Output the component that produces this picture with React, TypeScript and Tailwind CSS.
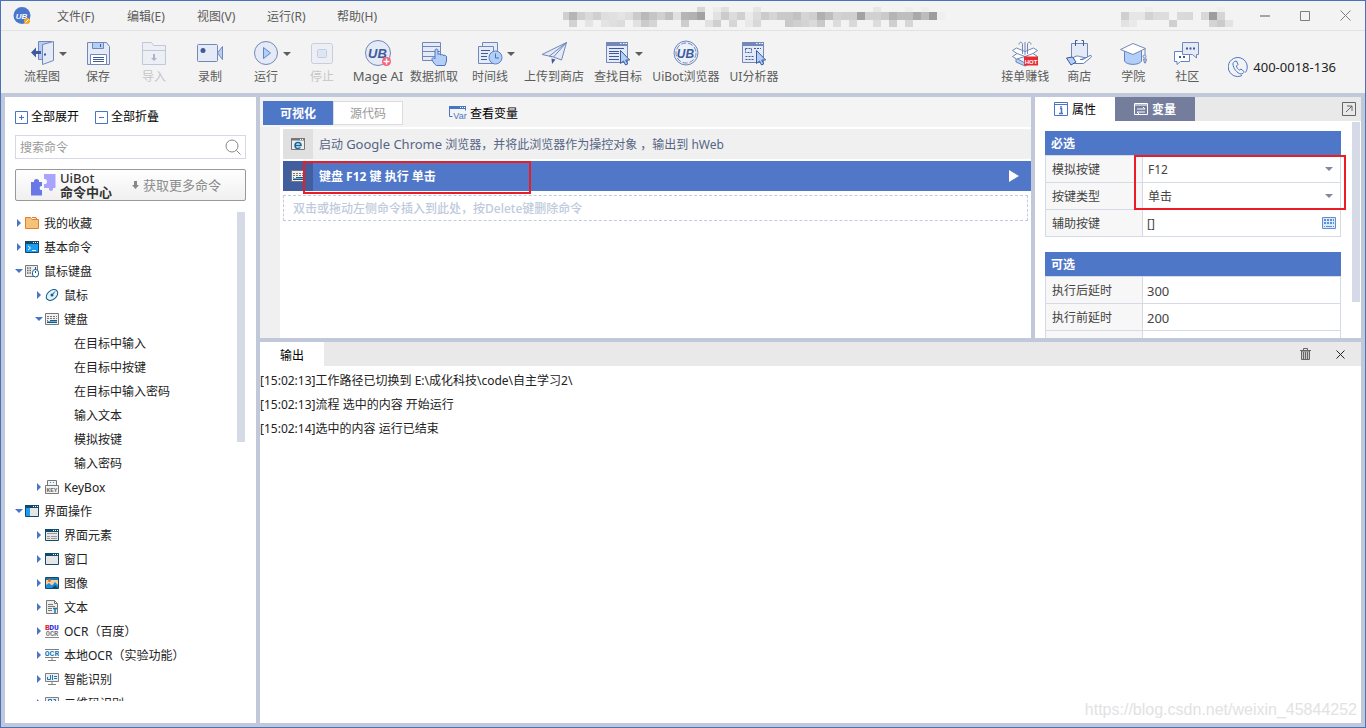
import type { ReactNode } from "react";

/* ---------- shared shapes ---------- */

const LINE = "#7388b8";
const PALE = "#e4eaf6";
const SKY = "#b4cff7";
const DARK = "#3d5b9b";

function Tool({ children }: { children: ReactNode }) {
  return (
    <svg width="28" height="28" viewBox="0 0 28 28" fill={PALE} stroke={LINE} aria-hidden="true">
      {children}
    </svg>
  );
}

function Small({ children }: { children: ReactNode }) {
  return (
    <svg width="14" height="14" viewBox="0 0 14 14" fill="none" className="shrink-0" aria-hidden="true">
      {children}
    </svg>
  );
}

function Caret({ className }: { className: string }) {
  return (
    <svg width="8" height="4" viewBox="0 0 8 4" className={className} aria-hidden="true">
      <path d="M0 0h8L4 4z" fill="currentColor" />
    </svg>
  );
}

function UB({ x, y, size, fill }: { x: number; y: number; size: number; fill: string }) {
  return (
    <text
      x={x}
      y={y}
      fontSize={size}
      fill={fill}
      stroke="none"
      textAnchor="middle"
      fontWeight="bold"
      fontStyle="italic"
      fontFamily="Liberation Sans, sans-serif"
    >
      UB
    </text>
  );
}

const pointer = <path d="M16.500 11.500v13l3-2.500 2 4 2.200-1-2-4h4z" fill={SKY} stroke={DARK} />;

/* ---------- toolbar icons ---------- */

const icons: Record<string, ReactNode> = {
  flow: (
    <Tool>
      <path d="M10.500 2.500h13v18h-13z" fill={SKY} />
      <path d="M14.500 5.500l11-3v19l-11 4z" />
      <path d="M3 13.500l5-5v3.500h5v3H8v3.500z" fill={DARK} stroke="none" />
      <path d="M16 14.500h2v2h-2z" fill={DARK} stroke="none" />
    </Tool>
  ),
  save: (
    <Tool>
      <path d="M3.500 3.500h19l3 4v18h-22z" />
      <path d="M8.500 3.500h11v6h-11z" fill={SKY} />
      <path d="M6.500 15.500h16v10h-16z" fill="#fff" />
      <path d="M16.500 5v3M9 18.500h11M9 20.500h11M9 22.500h11" stroke={DARK} />
    </Tool>
  ),
  import: (
    <Tool>
      <g opacity="0.4">
        <path d="M2.500 25.500v-22h9l2 3h12v19z" />
        <path d="M2.500 11.500h23" />
        <path d="M14 15v6" stroke={DARK} strokeWidth="2" />
        <path d="M11 19h6l-3 3z" fill={DARK} stroke="none" />
      </g>
    </Tool>
  ),
  record: (
    <Tool>
      <rect x="1.500" y="5.500" width="20" height="17" rx="1" />
      <path d="M21.500 14l5-6.500v13z" fill={SKY} />
      <circle cx="7" cy="11.500" r="2.500" fill={DARK} stroke="none" />
    </Tool>
  ),
  run: (
    <Tool>
      <circle cx="14" cy="14" r="11.500" />
      <path d="M11.500 8.500v11l7-5.500z" fill={SKY} stroke="#5f84c9" />
    </Tool>
  ),
  stop: (
    <Tool>
      <g opacity="0.35">
        <rect x="3.500" y="4.500" width="21" height="20" rx="2" />
        <rect x="9.500" y="10.500" width="9" height="8" rx="1" fill={SKY} />
      </g>
    </Tool>
  ),
  mage: (
    <Tool>
      <circle cx="14" cy="14" r="12.500" />
      <UB x={13.5} y={18.5} size={13} fill={DARK} />
      <circle cx="22.500" cy="22.500" r="4.500" fill="#f4607a" stroke="none" />
      <path d="M22.500 19.500v6M19.500 22.500h6" stroke="#fff" strokeWidth="1.500" />
    </Tool>
  ),
  grab: (
    <Tool>
      <path d="M2.500 3.500h18v18h-18zM2.500 7.500h18M2.500 12.500h18M2.500 17.500h18" />
      <path
        d="M15 20v-8.500c0-2 3-2 3 0v4c1-1 2-1 2.500.5 1-1 2.500-.5 2.500.5 1.500-.8 3.500 0 3.500 1.500v4l-1.500 4.500h-8.500c-2-1-3.500-3.500-4.500-6-.5-1.500 1.500-2.500 3-.5z"
        fill={SKY}
        stroke="#4e74bb"
      />
    </Tool>
  ),
  timeline: (
    <Tool>
      <path d="M6.500 7v-3.500h15v15" />
      <path d="M2.500 7.500h15v17h-15z" />
      <path d="M5 11.500h9M5 14.500h7M5 17.500h6M5 20.500h6" stroke={DARK} />
      <circle cx="19.500" cy="18.500" r="6.500" fill={SKY} stroke="#5b80c5" />
      <path d="M19.500 14.500v4.500h3.500" fill="none" stroke="#4a6fb5" />
    </Tool>
  ),
  plane: (
    <Tool>
      <path d="M2 15.500l24.500-12-5 17.500-8-3z" />
      <path d="M26.500 3.500L9.500 17l2.500 1M26.500 3.500L13.500 18" fill="none" />
      <path d="M11.500 19.500l4 1-3.500 4.500z" fill={DARK} stroke="none" />
    </Tool>
  ),
  find: (
    <Tool>
      <path d="M2.500 3.500h21v20h-21z" />
      <path d="M2 3h22v4H2z" fill={LINE} stroke="none" />
      <path d="M16 4.500h1.500M19 4.500h1.500M21.500 4.500h1.500" stroke="#fff" />
      <path d="M5 9.500h15M5 12.500h10M5 14.500h10M5 17.500h10M5 20.500h10" stroke={DARK} />
      {pointer}
    </Tool>
  ),
  browser: (
    <Tool>
      <circle cx="14" cy="14" r="12" />
      <circle cx="14" cy="14" r="10" strokeDasharray="5 2" fill="#edf1f9" />
      <UB x={13.5} y={18.5} size={12} fill={DARK} />
    </Tool>
  ),
  analyze: (
    <Tool>
      <path d="M2.500 3.500h21v20h-21z" />
      <path d="M2 3h22v4H2z" fill={LINE} stroke="none" />
      <path d="M16 4.500h1.500M19 4.500h1.500M21.500 4.500h1.500" stroke="#fff" />
      <path d="M5.500 9.500h6v4h-6zM5.500 17.500h9M5.500 20.500h9M14 9.500h7" strokeDasharray="2 1" stroke={DARK} fill="none" />
      {pointer}
    </Tool>
  ),
  earn: (
    <Tool>
      <path d="M5 19l9 5 9-5v4l-9 4-9-4z" fill={SKY} />
      <path d="M1.500 11.500l4-2.500 8.500 3.500L22.500 9l4 2.500-4.500 3 4.500 3-4 2.500-8.500-2.500-8.500 2.500-4-2.500 4.500-3z" fill="#fff" />
      <path d="M6 14.500l8 3 8-3" fill="none" />
      <path d="M11.500 15V5M14 16V3M16.500 15V5M8 5.500c0-3 3.500-3 3.500 0M16.500 5.500c0-3 3.500-3 3.500 0" fill="none" />
      <path d="M13 17.500h14v9H13z" fill="#ea2a33" stroke="none" />
      <text
        x="20"
        y="24.500"
        fontSize="6"
        fill="#fff"
        stroke="none"
        textAnchor="middle"
        fontWeight="bold"
        fontFamily="Liberation Sans, sans-serif"
      >
        HOT
      </text>
    </Tool>
  ),
  shop: (
    <Tool>
      <path d="M6.500 4.500h16v14h-16z" />
      <path d="M10.500 7V1.500M18.500 7V1.500M10.500 1.500h2M16.500 1.500h2" stroke={DARK} />
      <path d="M8.500 18.500c4-3 6-.5 8.500-.5s2 2.500-2 2.500h3l7-4c1.500-.3 1.800.7.8 2l-7.300 6H9.500z" fill="#fff" stroke="#5f7cb8" />
      <path d="M1.500 19l6-1 3.500 5-5 3z" fill={SKY} stroke={DARK} />
    </Tool>
  ),
  school: (
    <Tool>
      <path d="M5.500 11v11c2 4.500 15 4.500 17 0V11z" fill={SKY} stroke="#5f84c9" />
      <path d="M1.500 10.500L14 4.500l12.500 5L14 15.500z" fill="#fff" />
      <path d="M26 10v8" />
      <circle cx="25.500" cy="17.500" r="1.500" />
      <path d="M24.500 20h3l-1 4h-1z" fill={SKY} />
    </Tool>
  ),
  community: (
    <Tool>
      <path d="M1.500 12.500h15v10h-9l-3.500 3v-3H1.500z" fill="#fff" stroke="#5f84c9" />
      <path d="M9.500 3.500h16v12h-2v3.500l-4-3.500h-10z" />
      <path d="M13 9.500h2M16.500 9.500h2M20 9.500h2M6 18h2M10 18h2" stroke={DARK} strokeWidth="2" />
    </Tool>
  ),
};

type ToolItem = { label: string; icon: string; width: string; caret?: boolean; off?: boolean };

const mainTools: ToolItem[] = [
  { label: "流程图", icon: "flow", width: "w-14", caret: true },
  { label: "保存", icon: "save", width: "w-14" },
  { label: "导入", icon: "import", width: "w-14", off: true },
  { label: "录制", icon: "record", width: "w-14" },
  { label: "运行", icon: "run", width: "w-14", caret: true },
  { label: "停止", icon: "stop", width: "w-14", off: true },
  { label: "Mage AI", icon: "mage", width: "w-14" },
  { label: "数据抓取", icon: "grab", width: "w-14" },
  { label: "时间线", icon: "timeline", width: "w-14", caret: true },
  { label: "上传到商店", icon: "plane", width: "w-[72px]" },
  { label: "查找目标", icon: "find", width: "w-14", caret: true },
  { label: "UiBot浏览器", icon: "browser", width: "w-20" },
  { label: "UI分析器", icon: "analyze", width: "w-14" },
];

const sideTools: ToolItem[] = [
  { label: "接单赚钱", icon: "earn", width: "w-[54px]" },
  { label: "商店", icon: "shop", width: "w-[54px]" },
  { label: "学院", icon: "school", width: "w-[54px]" },
  { label: "社区", icon: "community", width: "w-[54px]" },
];

function ToolButton({ item }: { item: ToolItem }) {
  return (
    <button
      disabled={item.off}
      className={`relative flex shrink-0 flex-col items-center whitespace-nowrap pt-2 ${item.width} ${
        item.off ? "text-[#c6c6c8]" : "text-[#5c5c5c]"
      }`}
    >
      {icons[item.icon]}
      <span className={item.label === "Mage AI" ? "text-[13px] leading-[18px]" : "leading-5"}>{item.label}</span>
      {item.caret && <Caret className="absolute right-[3px] top-[21px] text-[#5e5e5e]" />}
    </button>
  );
}

/* ---------- title bar ---------- */

type Cell = [number, number, string];

const titleMid =
  "b5 cf da d0 de e0 e4 de cb b9 c5 d0 c0 e0 b5 b2 a2 f3 e2 cb dc d0 eb dc cb d5 ca c9 c2 d5 cf b0 be d3 cf cf a2 d1 d1 ca b5 be be a9 bc 9d ef"
    .split(" ")
    .map((c, i): Cell => [i, 1, c]);

const titleCells: Cell[] = [
  ...titleMid,
  [16, 0, "d6"], [18, 0, "ec"], [19, 0, "df"], [23, 0, "e6"], [38, 0, "e6"], [42, 0, "ee"], [44, 0, "ee"],
  [0, 2, "d2"], [2, 2, "e4"], [4, 2, "e3"], [5, 2, "df"], [6, 2, "dc"], [8, 2, "e1"], [9, 2, "cb"], [10, 2, "d5"],
  [14, 2, "cd"], [17, 2, "e1"], [18, 2, "cf"], [20, 2, "d6"], [22, 2, "e8"], [23, 2, "d8"], [27, 2, "c9"],
  [28, 2, "cf"], [29, 2, "d3"], [30, 2, "da"], [31, 2, "c9"], [33, 2, "dc"], [35, 2, "d9"], [38, 2, "dc"],
  [40, 2, "cf"], [42, 2, "d6"],
];

const userCells: Cell[] = [
  [0, 1, "cf"], [1, 1, "e6"], [2, 1, "e6"], [3, 1, "d2"], [4, 1, "dc"], [5, 1, "dd"], [7, 1, "da"], [8, 1, "d8"],
  [10, 1, "d8"], [11, 1, "9d"], [12, 1, "d5"], [3, 0, "ef"], [12, 0, "ef"], [0, 2, "e2"], [1, 2, "e9"],
  [6, 2, "cf"], [11, 2, "d4"], [12, 2, "cb"], [13, 2, "e3"],
];

function Mosaic({ cells, columns }: { cells: Cell[]; columns: number }) {
  return (
    <svg width={columns * 8} height="24" viewBox={`0 0 ${columns * 8} 24`} shapeRendering="crispEdges" className="shrink-0 overflow-visible" aria-hidden="true">
      {columns > 20 && <rect x="-6" y="8" width="6" height="8" fill="#cfcfcf" />}
      {cells.map(([x, y, c]) => (
        <rect key={`${x}-${y}`} x={x * 8} y={y === 0 ? 3 : y * 8} width="8" height={y === 0 ? 5 : y === 1 ? 8 : 7} fill={`#${c}${c}${c}`} />
      ))}
    </svg>
  );
}

function TitleBar() {
  return (
    <header className="flex h-[30px] shrink-0 items-center border-b border-[#e2e2e2] bg-[#f3f3f3] text-[#5c5c5c]">
      <svg width="18" height="18" viewBox="0 0 18 18" className="ml-3 shrink-0" aria-hidden="true">
        <circle cx="9" cy="8.500" r="8.500" fill="#4c76cb" />
        <UB x={8.5} y={11.5} size={8} fill="#fff" />
        <circle cx="14" cy="14" r="3" fill="#f4a81d" />
        <path d="M12.500 15.500l3-3" stroke="#fff" />
      </svg>
      <nav className="ml-[26px] flex pt-0.5">
        {["文件(F)", "编辑(E)", "视图(V)", "运行(R)", "帮助(H)"].map((m) => (
          <button key={m} className="w-[70px] shrink-0 text-left">
            {m}
          </button>
        ))}
      </nav>
      <div className="flex flex-1 justify-center pr-3.5">
        <Mosaic cells={titleCells} columns={47} />
      </div>
      <Mosaic cells={userCells} columns={14} />
      <div className="ml-3 flex items-center text-[#7d7d7d]">
        <button aria-label="最小化" className="flex w-10 justify-center">
          <svg width="11" height="11" viewBox="0 0 11 11" stroke="#a5a5a5" strokeWidth="2">
            <path d="M0 6h10" />
          </svg>
        </button>
        <button aria-label="最大化" className="flex w-10 justify-center">
          <svg width="11" height="11" viewBox="0 0 11 11" fill="none" stroke="currentColor">
            <path d="M.5 1.500h9v9h-9z" />
          </svg>
        </button>
        <button aria-label="关闭" className="flex w-10 justify-center">
          <svg width="11" height="11" viewBox="0 0 11 11" stroke="currentColor">
            <path d="M.5.500l10 10M10.500.500l-10 10" />
          </svg>
        </button>
      </div>
    </header>
  );
}

/* ---------- command tree ---------- */

const NAVY = "#124a6e";

const windowFrame = (
  <>
    <path d="M.5 1.500h13v11H.5z" fill="#e6e6e6" stroke={NAVY} />
    <path d="M0 1h14v3H0z" fill={NAVY} />
    <path d="M8 2.500h1M10 2.500h1M12 2.500h1" stroke="#fff" />
  </>
);

const monitor = (
  <>
    <path d="M.5 1.500h13v8H.5z" fill="#eee" stroke="#808080" />
    <path d="M7 10v2M3 12.500h8" stroke="#808080" />
  </>
);

const keyboard = (
  <>
    <path d="M.5 1.500h13v11H.5z" fill="#f1f1f1" stroke="#777" />
    <path d="M2 4.500h10M2 6.500h10" stroke="#777" strokeDasharray="2 1" />
    <path d="M2 8.500h1M11 8.500h1M2 10.500h10" stroke="#777" />
    <path d="M2 10h10M5 8.500h7" stroke="#0f5d8c" />
    <path d="M2 10.500h10" stroke="#0f5d8c" />
  </>
);

function MiniText({ x, y, size, fill, children }: { x: number; y: number; size: number; fill: string; children: string }) {
  return (
    <text x={x} y={y} fontSize={size} fill={fill} textAnchor="middle" fontWeight="bold" fontFamily="Liberation Mono, monospace">
      {children}
    </text>
  );
}

type Node = { label: string; level: 0 | 1 | 2; open?: boolean; icon?: ReactNode };

const tree: Node[] = [
  { label: "我的收藏", level: 0, icon: <path d="M.5 12.500v-11h5l1.500 2h6.500v9zM7 1.500h4l1 2" fill="#f4c37a" stroke="#e97c2b" /> },
  {
    label: "基本命令",
    level: 0,
    icon: (
      <>
        <path d="M.5 1.500h13v11H.5z" fill="#1b9df2" stroke={NAVY} />
        <path d="M0 1h14v3H0z" fill={NAVY} />
        <path d="M8 2.500h1M10 2.500h1M12 2.500h1M3 6l2.500 2L3 10M7 10.500h4" stroke="#fff" />
      </>
    ),
  },
  {
    label: "鼠标键盘",
    level: 0,
    open: true,
    icon: (
      <>
        <path d="M.5 1.500h12v11H.5z" fill="#eee" stroke="#777" />
        <path d="M2 4h5M2 6.500h5M2 9h5" stroke="#666" strokeWidth="1.500" strokeDasharray="1.500 1" />
        <rect x="7.500" y="5.500" width="6" height="7.500" rx="3" fill="#fff" stroke="#0f5d8c" />
        <path d="M10.500 5.500V3M10.500 7v2" stroke="#0f5d8c" />
      </>
    ),
  },
  {
    label: "鼠标",
    level: 1,
    icon: (
      <>
        <ellipse cx="7" cy="7" rx="6.500" ry="4.500" transform="rotate(-40 7 7)" fill="#e4f0f8" stroke="#0f5d8c" />
        <circle cx="7" cy="7" r="1.500" fill="#0f5d8c" />
        <path d="M7 7l3-3.500" stroke="#0f5d8c" />
      </>
    ),
  },
  { label: "键盘", level: 1, open: true, icon: keyboard },
  { label: "在目标中输入", level: 2 },
  { label: "在目标中按键", level: 2 },
  { label: "在目标中输入密码", level: 2 },
  { label: "输入文本", level: 2 },
  { label: "模拟按键", level: 2 },
  { label: "输入密码", level: 2 },
  {
    label: "KeyBox",
    level: 1,
    icon: (
      <>
        <path d="M2.500 5V.500h9V5M.5 5.500h13v8H.5z" fill="#f3f3f3" stroke="#777" />
        <path d="M5 2.500h1M8 2.500h1" stroke="#1b9df2" />
        <MiniText x={7} y={12} size={6} fill="#666">KEY</MiniText>
      </>
    ),
  },
  {
    label: "界面操作",
    level: 0,
    open: true,
    icon: (
      <>
        {windowFrame}
        <path d="M1 4h4v8H1z" fill="#1b9df2" />
      </>
    ),
  },
  {
    label: "界面元素",
    level: 1,
    icon: (
      <>
        {windowFrame}
        <path d="M2 5.500h10M2 8.500h3M2 10.500h3M6 8.500h6M6 10.500h6" stroke="#999" />
      </>
    ),
  },
  { label: "窗口", level: 1, icon: windowFrame },
  {
    label: "图像",
    level: 1,
    icon: (
      <>
        <path d="M.5 1.500h13v11H.5z" fill="#f7cf95" stroke={NAVY} />
        <path d="M1 2h12v2H1z" fill="#1679b8" />
        <circle cx="4.500" cy="4.500" r="1.500" fill="#ef6b2a" />
        <path d="M1 12V9l3-2 3 2.500L10 6l3 3v3z" fill="#1b8fe0" />
        <path d="M7 12l3-3 3 3z" fill={NAVY} />
      </>
    ),
  },
  {
    label: "文本",
    level: 1,
    icon: (
      <>
        <path d="M1.500.500h8l3 3v10h-11zM9.500.500v3h3" fill="#eee" stroke="#777" />
        <path d="M3 4.500h5M3 6.500h7M3 8.500h4M3 10.500h4" stroke="#777" />
        <path d="M8 8.500h4M10 8.500V13" stroke="#1679b8" strokeWidth="1.500" />
      </>
    ),
  },
  {
    label: "OCR（百度）",
    level: 1,
    icon: (
      <>
        <MiniText x={2.5} y={6} size={8} fill="#e02020">B</MiniText>
        <MiniText x={9} y={6} size={8} fill="#2a2ae0">DU</MiniText>
        <MiniText x={7} y={12} size={7} fill="#777">OCR</MiniText>
        <path d="M0 13.500h14" stroke="#888" />
      </>
    ),
  },
  {
    label: "本地OCR（实验功能）",
    level: 1,
    icon: (
      <>
        <path d="M0 1.500h14M0 9.500h14M7 10v2M3 12.500h8" stroke="#808080" />
        <MiniText x={7} y={8} size={8} fill="#1679b8">OCR</MiniText>
      </>
    ),
  },
  {
    label: "智能识别",
    level: 1,
    icon: (
      <>
        {monitor}
        <path d="M5.500 3v4.500h-3V5M7.500 3v5M9 4.500h3M9 6.500h3" stroke="#1679b8" />
      </>
    ),
  },
  {
    label: "二维码识别",
    level: 1,
    icon: (
      <>
        {monitor}
        <path d="M3.500 3.500h3v4h-3zM8.500 3.500h2v2M10.500 7v1" stroke="#1679b8" />
      </>
    ),
  },
];

const indent = ["pl-0", "pl-5", "pl-[59px]"];

function TreeRow({ node }: { node: Node }) {
  return (
    <li className={`flex h-6 items-center ${indent[node.level]}`}>
      {node.level < 2 && (
        <svg width="8" height="8" viewBox="0 0 8 8" className="mr-0.5 shrink-0" fill="#4a74c6" aria-hidden="true">
          {node.open ? <path d="M0 2h8L4 6z" /> : <path d="M2 0l4 4-4 4z" />}
        </svg>
      )}
      {node.icon && <Small>{node.icon}</Small>}
      <span className={node.level < 2 ? "ml-[5px] pt-0.5" : "pt-0.5"}>{node.label}</span>
    </li>
  );
}

function CommandPanel() {
  return (
    <aside className="flex w-[251px] shrink-0 flex-col overflow-hidden bg-white px-2.5 pt-2.5 text-[#222]">
      <div className="flex h-5 shrink-0 gap-4 text-black">
        <button className="flex items-center gap-[3px]">
          <svg width="13" height="13" viewBox="0 0 13 13" fill="none" stroke="#4a74c6" aria-hidden="true">
            <path d="M.5.500h12v12H.5zM4 6.500h5M6.500 4v5" />
          </svg>
          全部展开
        </button>
        <button className="flex items-center gap-[3px]">
          <svg width="13" height="13" viewBox="0 0 13 13" fill="none" stroke="#4a74c6" aria-hidden="true">
            <path d="M.5.500h12v12H.5zM4 6.500h5" />
          </svg>
          全部折叠
        </button>
      </div>
      <label className="mt-2 flex h-6 shrink-0 items-center border border-[#d5d9e6] px-1">
        <input aria-label="搜索命令" placeholder="搜索命令" className="min-w-0 flex-1 pt-0.5 outline-none placeholder:text-[#999]" />
        <svg width="16" height="16" viewBox="0 0 16 16" fill="none" stroke="#888" aria-hidden="true">
          <circle cx="7" cy="7" r="6" />
          <path d="M11.500 11.500l4 4" />
        </svg>
      </label>
      <button className="mt-2.5 flex h-8 shrink-0 items-center rounded-xs border border-[#999] bg-linear-to-b from-white to-[#f0f0f0] pl-[15px]">
        <svg width="25" height="22" viewBox="0 0 25 22" className="shrink-0" aria-hidden="true">
          <path d="M0 8h3c-1-4 6-4 5 0h3v4c-3-1-3 5 0 4v5.500H0z" fill="#6a78e6" />
          <path d="M13 0h11.500v14H22c1 4-5 4-4 0h-5v-4c4 1 4-6 0-5z" fill="#a9a4fb" />
        </svg>
        <span className="ml-1 flex flex-col text-left text-[13px] font-bold leading-[14px] text-[#333]">
          <span className="font-medium">UiBot</span>
          <span>命令中心</span>
        </span>
        <svg width="7" height="8" viewBox="0 0 7 8" className="ml-5 shrink-0" fill="#888" aria-hidden="true">
          <path d="M2 0h3v4h2L3.500 8 0 4h2z" />
        </svg>
        <span className="ml-1 text-[13px] text-[#8c8c8c]">获取更多命令</span>
      </button>
      <div className="mb-[22px] mt-2.5 flex min-h-0 flex-1 justify-between overflow-hidden">
        <ul>
          {tree.map((n) => (
            <TreeRow key={n.label} node={n} />
          ))}
        </ul>
        <div className="mr-px mt-px h-[47%] w-2 bg-[#d6dae6]" />
      </div>
    </aside>
  );
}

/* ---------- editor ---------- */

function Editor() {
  return (
    <section className="flex min-w-0 flex-1 flex-col overflow-hidden bg-white">
      <div className="flex h-[30px] shrink-0 items-center bg-[#f4f4f4] pl-[3px] pt-0.5">
        <button className="h-6 w-[70px] bg-[#4f77c8] pt-0.5 font-bold text-white">可视化</button>
        <button className="h-6 w-[70px] border border-[#dcdcdc] bg-white pt-0.5 text-[#999]">源代码</button>
        <button className="ml-[46px] flex items-center gap-[3px] text-black">
          <svg width="18" height="14" viewBox="0 0 18 14" fill="none" aria-hidden="true">
            <path d="M3.500 10.500h-3v-10h16v4" stroke="#4a74c6" />
            <path d="M0 0h17v3H0z" fill="#4a74c6" />
            <path d="M11 1.500h1M13 1.500h1M15 1.500h1" stroke="#fff" />
            <text x="11" y="12.500" fontSize="9" fill="#4a74c6" textAnchor="middle" fontFamily="Liberation Sans, sans-serif">
              Var
            </text>
          </svg>
          <span className="pt-0.5">查看变量</span>
        </button>
      </div>
      <div className="flex min-h-0 flex-1">
        <div className="w-5 shrink-0 bg-[#f0f0f0]" />
        <div className="min-w-0 flex-1 pl-[3px] pt-0.5">
          <div className="flex h-[30px] items-center bg-[#f0f0f0] text-[#566584]">
            <span className="flex h-full w-[30px] items-center justify-center bg-[#e0e0e0]">
              <Small>
                <path d="M.5 1.500h13v11H.5z" fill="#eee" stroke="#777" />
                <path d="M0 1h14v2.500H0z" fill="#777" />
                <path d="M9 2.500h1M11 2.500h1" stroke="#fff" />
                <path d="M4 8.500h6c0-4-6-4-6 0s4 3 5.500 2" stroke="#0f6a9c" strokeWidth="1.500" />
              </Small>
            </span>
            <span className="ml-1.5 whitespace-pre pt-px">
              启动 <span className="text-[13px]">Google Chrome</span> 浏览器，并将此浏览器作为操控对象 ，输出到 hWeb
            </span>
          </div>
          <div className="relative mt-0.5 flex h-[30px] items-center bg-[#5077c8] font-bold text-white">
            <span className="flex h-full w-[30px] items-center justify-center bg-[#415f9f]">
              <Small>{keyboard}</Small>
            </span>
            <span className="ml-1.5 pt-0.5">键盘 F12 键 执行 单击</span>
            <button aria-label="运行此命令" className="ml-auto mr-3">
              <svg width="10" height="12" viewBox="0 0 10 12" fill="#fff">
                <path d="M0 0l10 6-10 6z" />
              </svg>
            </button>
            <span className="pointer-events-none absolute left-5 top-0 h-[33px] w-[228px] border-2 border-[#ec1c24]" />
          </div>
          <div className="mr-[3px] mt-1 flex h-[26px] items-center border border-dashed border-[#c0cbe0] pl-[9px] pt-0.5 font-medium text-[#c0cadd]">
            双击或拖动左侧命令插入到此处，按Delete键删除命令
          </div>
        </div>
      </div>
    </section>
  );
}

/* ---------- properties ---------- */

type Field = { id: string; label: string; value: string; kind: "select" | "keys" | "text" };

const required: Field[] = [
  { id: "key", label: "模拟按键", value: "F12", kind: "select" },
  { id: "type", label: "按键类型", value: "单击", kind: "select" },
  { id: "mods", label: "辅助按键", value: "[]", kind: "keys" },
];

const optional: Field[] = [
  { id: "after", label: "执行后延时", value: "300", kind: "text" },
  { id: "before", label: "执行前延时", value: "200", kind: "text" },
];

function FieldControl({ field }: { field: Field }) {
  if (field.kind === "select") {
    return (
      <div className="relative flex items-center">
        <select id={field.id} defaultValue={field.value} className="w-full appearance-none bg-transparent pl-[5px] pt-0.5 outline-none">
          <option>{field.value}</option>
        </select>
        <Caret className="pointer-events-none absolute right-[7px] text-[#8088a0]" />
      </div>
    );
  }
  return (
    <div className="flex items-center">
      <input
        id={field.id}
        defaultValue={field.value}
        className={`min-w-0 flex-1 bg-transparent pl-1 pt-0.5 outline-none ${field.kind === "text" ? "text-[13px]" : ""}`}
      />
      {field.kind === "keys" && (
        <button aria-label="选择按键" className="mr-1">
          <svg width="14" height="12" viewBox="0 0 14 12" fill="none" aria-hidden="true">
            <path d="M.5.500h13v11H.5z" fill="#deeafa" stroke="#5a8fd8" />
            <path d="M2 3h10M2 6h10" stroke="#5a8fd8" strokeWidth="2" strokeDasharray="2 1" />
            <path d="M2 9.500h1M4 9.500h6M11 9.500h1" stroke="#5a8fd8" />
          </svg>
        </button>
      )}
    </div>
  );
}

function FieldTable({ title, fields, marked }: { title: string; fields: Field[]; marked?: boolean }) {
  return (
    <div className="relative">
      <h2 className="h-6 bg-[#4f77c8] pl-1.5 pt-px font-bold leading-6 text-white">{title}</h2>
      <table className="w-full border-collapse">
        <tbody>
          {fields.map((f) => (
            <tr key={f.id} className="h-[27px]">
              <th className="w-[97px] border border-[#d5dae5] bg-[#f7f7f7] p-0 pl-1.5 text-left font-normal">
                <label htmlFor={f.id} className="block pt-0.5">
                  {f.label}
                </label>
              </th>
              <td className="border border-[#d5dae5] p-0">
                <FieldControl field={f} />
              </td>
            </tr>
          ))}
          {!marked && (
            <tr className="h-[27px]">
              <th className="border border-[#d5dae5] bg-[#f7f7f7]" />
              <td className="border border-[#d5dae5]" />
            </tr>
          )}
        </tbody>
      </table>
      {marked && (
        <span className="pointer-events-none absolute -right-[5px] left-[89px] top-6 h-[55px] border-2 border-[#ec1c24]" />
      )}
    </div>
  );
}

function Properties() {
  return (
    <section className="flex w-[326px] shrink-0 flex-col overflow-hidden bg-white text-[#444]">
      <div className="flex h-6 shrink-0 items-center bg-[#e9e9e9]">
        <button className="flex h-full w-20 items-center justify-center gap-1 bg-white text-black">
          <Small>
            <path d="M.5.500h13v13H.5zM.5 2.500h13" stroke="#4a74c6" />
            <path d="M6 6.500h1.500V11M5 11.500h4M7 4v1.500" stroke="#4a74c6" strokeWidth="1.500" />
          </Small>
          <span className="pt-0.5">属性</span>
        </button>
        <button className="flex h-full w-20 items-center justify-center gap-1 bg-[#747e9c] font-bold text-white">
          <Small>
            <path d="M.5 1.500h13v11H.5zM.5 3h13M3 7h8l-2-2M11 10H3l2 2" stroke="#fff" />
          </Small>
          <span className="pt-0.5">变量</span>
        </button>
        <button aria-label="弹出面板" className="ml-auto mr-[5px]">
          <svg width="14" height="14" viewBox="0 0 14 14" fill="none" stroke="#666" aria-hidden="true">
            <path d="M.5.500h13v13H.5zM4 10l6-6M5 4h5v5" />
          </svg>
        </button>
      </div>
      <div className="flex min-h-0 flex-1 gap-[11px] overflow-hidden pl-2.5 pr-px pt-px">
        <div className="flex flex-1 flex-col gap-[15px] pt-[9px]">
          <FieldTable title="必选" fields={required} marked />
          <FieldTable title="可选" fields={optional} />
        </div>
        <div className="h-5/6 w-2 bg-[#d6dae6]" />
      </div>
    </section>
  );
}

/* ---------- output ---------- */

const logs = [
  "[15:02:13]工作路径已切换到 E:\\成化科技\\code\\自主学习2\\",
  "[15:02:13]流程 选中的内容 开始运行",
  "[15:02:14]选中的内容 运行已结束",
];

function Output() {
  return (
    <section className="relative min-h-0 overflow-hidden bg-white text-[#222]">
      <div className="flex h-6 items-center bg-[#e9e9e9]">
        <button className="h-full w-16 bg-white pt-1 text-black">输出</button>
        <button aria-label="清空" className="ml-auto mr-[25px]">
          <svg width="11" height="12" viewBox="0 0 11 12" fill="#c8c8c8" stroke="#666" aria-hidden="true">
            <path d="M1.500 3v8.500h8V3z" />
            <path d="M0 2.500h11M3.500 2V.500h4V2M3.500 4v7M5.500 4v7M7.500 4v7" fill="none" />
          </svg>
        </button>
        <button aria-label="关闭输出" className="mr-4">
          <svg width="9" height="9" viewBox="0 0 9 9" stroke="#222" aria-hidden="true">
            <path d="M.5.500l8 8M8.500.500l-8 8" />
          </svg>
        </button>
      </div>
      <div className="pt-[3px]">
        {logs.map((l) => (
          <p key={l} className="leading-6">
            {l}
          </p>
        ))}
      </div>
      <p className="absolute bottom-1 right-1 font-['Liberation_Sans',sans-serif] text-[16px] leading-[18px] text-[#e2e2e2]">
        https://blog.csdn.net/weixin_45844252
      </p>
    </section>
  );
}

export default function App() {
  return (
    <div className="flex h-screen flex-col overflow-hidden border border-[#4a72bb] bg-[#f3f3f3] font-['Noto_Sans','Noto_Sans_CJK_SC',sans-serif] text-[12px] leading-[18px]">
      <TitleBar />
      <div className="flex h-[62px] shrink-0 items-start justify-between pl-[13px] pr-[29px]">
        <div className="flex">
          {mainTools.map((t) => (
            <ToolButton key={t.label} item={t} />
          ))}
        </div>
        <div className="flex">
          {sideTools.map((t) => (
            <ToolButton key={t.label} item={t} />
          ))}
          <a href="tel:400-0018-136" className="ml-3.5 flex items-center gap-[5px] pt-4 text-[13px] text-[#222]">
            <svg width="20" height="20" viewBox="0 0 20 20" fill="none" stroke="#4a74c6" aria-hidden="true">
              <path d="M14 18.500A9.500 9.500 0 1 1 17.500 15.500" />
              <path d="M6.500 4.500l2-.5 1.500 3.500-1.500 1.500c0 1.500 1.500 3.500 3 4l1.500-1 3 2.500c0 1.500-1.500 2.500-3 2.500C9 16.500 5 11 5 7c0-1 .5-2 1.500-2.500z" />
            </svg>
            400-0018-136
          </a>
        </div>
      </div>
      <main className="flex min-h-0 flex-1 gap-1 bg-[#c1c8d9] p-1">
        <CommandPanel />
        <div className="grid min-w-0 flex-1 grid-rows-[minmax(0,241fr)_minmax(0,381fr)] gap-1">
          <div className="flex min-h-0 gap-1">
            <Editor />
            <Properties />
          </div>
          <Output />
        </div>
      </main>
    </div>
  );
}
